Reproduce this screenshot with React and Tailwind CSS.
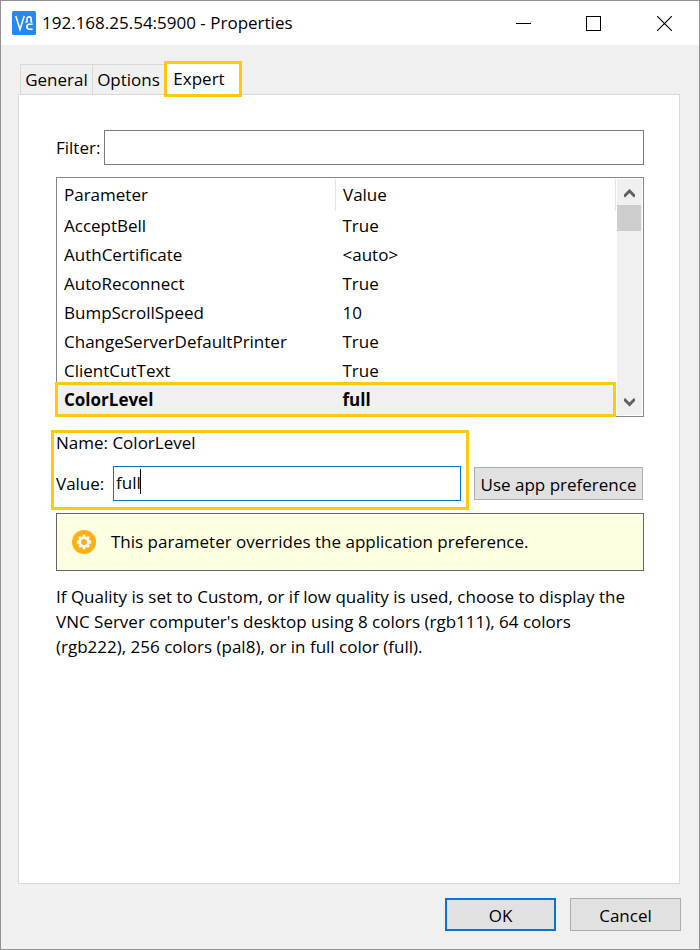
import { clsx } from 'clsx';

const TABS = ['General', 'Options', 'Expert'];

const PARAMETERS = [
  { name: 'AcceptBell', value: 'True' },
  { name: 'AuthCertificate', value: '<auto>' },
  { name: 'AutoReconnect', value: 'True' },
  { name: 'BumpScrollSpeed', value: '10' },
  { name: 'ChangeServerDefaultPrinter', value: 'True' },
  { name: 'ClientCutText', value: 'True' },
  { name: 'ColorLevel', value: 'full', selected: true }
];

function VncLogo() {
  return (
    <svg viewBox="0 0 24 24" className="size-6 shrink-0" fill="none" aria-hidden="true">
      <rect width="24" height="24" rx="1.5" fill="#2489f5" />
      <g stroke="#fff" strokeWidth="1.6">
        <path d="M3.8 5 8 18.4 12.2 5" />
        <path d="M15 11V8a2.1 2.1 0 0 1 4.2 0v3" />
        <path d="M13.2 11.2h2.4M18.6 11.2h2" strokeWidth="1" />
        <path d="M20.6 13.2h-3.2a2.5 2.5 0 0 0 0 5h3.2" />
      </g>
    </svg>
  );
}

function GearBadge() {
  return (
    <svg viewBox="0 0 24 24" className="size-6 shrink-0" aria-hidden="true">
      <circle cx="12" cy="12" r="12" fill="#ffae14" />
      <g stroke="#fff" fill="none">
        <circle cx="12" cy="12" r="4.3" strokeWidth="2.6" />
        <path
          strokeWidth="2.8"
          d="M12 4.8v2.4M12 16.8v2.4M4.8 12h2.4M16.8 12h2.4M6.9 6.9l1.7 1.7M15.4 15.4l1.7 1.7M6.9 17.1l1.7-1.7M15.4 8.6l1.7-1.7"
        />
      </g>
    </svg>
  );
}

function TitleBar() {
  return (
    <header className="flex h-11 items-center bg-white pl-[11px]">
      <VncLogo />
      <h1 className="flex-1 pl-1.5">192.168.25.54:5900 - Properties</h1>
      <div className="flex self-stretch">
        <button type="button" aria-label="Minimize" className="flex w-[67px] items-center justify-center">
          <svg width="15" height="15" shapeRendering="crispEdges" aria-hidden="true">
            <path d="M0 7.5h15" stroke="#000" />
          </svg>
        </button>
        <button type="button" aria-label="Maximize" className="flex w-[73px] items-center justify-center">
          <svg width="15" height="15" shapeRendering="crispEdges" aria-hidden="true">
            <path d="M.5.5h14v14H.5z" fill="none" stroke="#000" />
          </svg>
        </button>
        <button type="button" aria-label="Close" className="flex w-[69px] items-center justify-center">
          <svg width="15" height="15" aria-hidden="true">
            <path d="M0 0l15 15M15 0L0 15" stroke="#000" strokeWidth="1.1" />
          </svg>
        </button>
      </div>
    </header>
  );
}

function TabBar() {
  return (
    <div role="tablist" className="flex items-end pl-0.5">
      {TABS.map((tab) => {
        const active = tab === 'Expert';
        return (
          <button
            key={tab}
            type="button"
            role="tab"
            aria-selected={active}
            className={clsx(
              active
                ? 'relative -mb-[3px] h-9 w-[78px] border-3 border-[#ffc90e] bg-white pr-2'
                : 'h-[30px] w-[72px] border-t border-l border-[#d9d9d9] whitespace-nowrap'
            )}
          >
            {tab}
          </button>
        );
      })}
    </div>
  );
}

function ScrollBar() {
  return (
    <div className="flex w-[25px] shrink-0 flex-col bg-[#f0f0f0]">
      <button type="button" aria-label="Scroll up" className="flex h-[26px] items-center justify-center">
        <svg width="11" height="10" className="mt-1" aria-hidden="true">
          <path d="M0 7.5 5.5 2 11 7.5" fill="none" stroke="#606060" strokeWidth="3" />
        </svg>
      </button>
      <div className="mr-px h-[26px] bg-[#cdcdcd]" />
      <button type="button" aria-label="Scroll down" className="mt-auto flex h-[26px] items-center justify-center">
        <svg width="11" height="10" aria-hidden="true">
          <path d="M0 2 5.5 7.5 11 2" fill="none" stroke="#606060" strokeWidth="3" />
        </svg>
      </button>
    </div>
  );
}

function ParameterList() {
  return (
    <div className="mt-3 flex border border-[#828790] p-px">
      <table className="mb-px flex-1 table-fixed text-left">
        <thead>
          <tr className="h-8">
            <th className="w-1/2 border-r border-[#e5e5e5] pl-1.5 font-normal">Parameter</th>
            <th className="pl-[7px] font-normal">Value</th>
          </tr>
        </thead>
        <tbody>
          {PARAMETERS.map((param) => (
            <tr
              key={param.name}
              className={clsx(
                'h-[29px]',
                param.selected && 'bg-[#f0f0f0] font-bold outline-3 outline-[#ffc90e]'
              )}
            >
              <td className="pl-1.5">{param.name}</td>
              <td className="pl-[7px]">{param.value}</td>
            </tr>
          ))}
        </tbody>
      </table>
      <div className="mr-px h-8 w-[3px] border-r border-[#e5e5e5]" />
      <ScrollBar />
    </div>
  );
}

function ValueEditor() {
  return (
    <div className="mt-[13px] -ml-[5px] flex items-end gap-[5px] pr-px">
      <div className="flex-1 border-3 border-[#ffc90e] pr-[5px] pb-1.5 pl-0.5">
        <p className="h-[33px] leading-5">Name: ColorLevel</p>
        <div className="flex items-center">
          <label htmlFor="value" className="w-[57px]">
            Value:
          </label>
          <div className="relative flex-1">
            <input
              id="value"
              type="text"
              defaultValue="full"
              className="block h-[35px] w-full border border-[#0078d7] px-0.5 pb-0.5 caret-transparent outline-none"
            />
            <span className="absolute top-[3px] left-[27px] h-[25px] w-px bg-black" />
          </div>
        </div>
      </div>
      <button
        type="button"
        className="mb-2.5 h-[33px] w-[169px] border border-[#adadad] bg-[#e1e1e1] pt-0.5 whitespace-nowrap"
      >
        Use app preference
      </button>
    </div>
  );
}

export default function App() {
  return (
    <div className="flex min-h-screen flex-col border border-[#919191] bg-[#f0f0f0] font-['Open_Sans',sans-serif] text-[17px] leading-6 text-black">
      <TitleBar />

      <main className="flex flex-1 flex-col pt-4 pr-[19px] pl-[17px]">
        <TabBar />
        <section className="flex-1 border border-[#d9d9d9] bg-white pt-[35px] pr-[35px] pl-[37px]">
          <div className="flex items-center">
            <label htmlFor="filter" className="w-12">
              Filter:
            </label>
            <input
              id="filter"
              type="text"
              className="h-[35px] flex-1 border border-[#7a7a7a] px-1 outline-none"
            />
          </div>

          <ParameterList />
          <ValueEditor />

          <div className="mt-[3px] flex h-[58px] items-center gap-[15px] border border-[#646464] bg-[#ffffe1] pl-[15px]">
            <GearBadge />
            <p>This parameter overrides the application preference.</p>
          </div>

          <p className="mt-[13px] leading-[25px]">
            If Quality is set to Custom, or if low quality is used, choose to display the VNC Server
            computer's desktop using 8 colors (rgb111), 64 colors (rgb222), 256 colors (pal8), or in
            full color (full).
          </p>
        </section>
      </main>

      <footer className="flex justify-end gap-3.5 pt-3.5 pr-[18px] pb-[18px]">
        <button type="button" className="h-[33px] w-[111px] border-2 border-[#0078d7] bg-[#e1e1e1] pt-0.5">
          OK
        </button>
        <button type="button" className="h-[33px] w-[111px] border border-[#adadad] bg-[#e1e1e1] pt-0.5">
          Cancel
        </button>
      </footer>
    </div>
  );
}
